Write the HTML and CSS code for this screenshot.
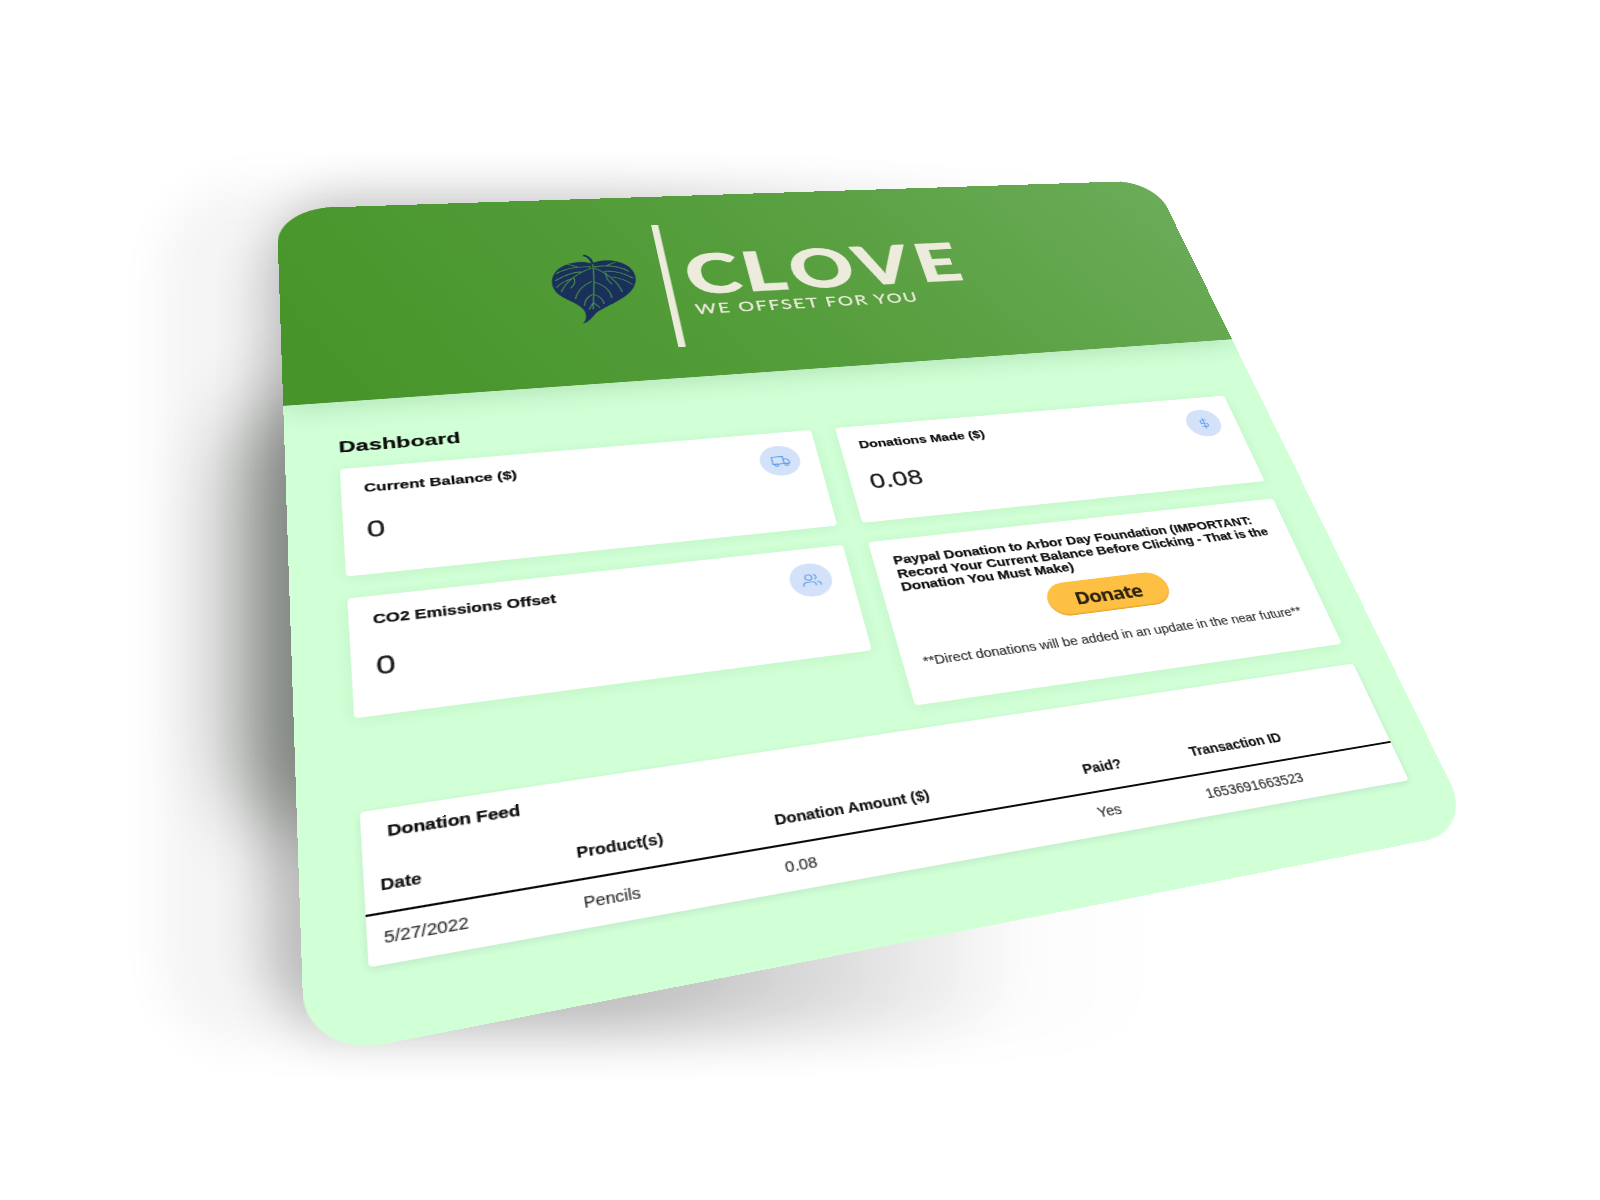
FILE: index.html
```html
<!DOCTYPE html>
<html lang="en">
<head>
<meta charset="utf-8">
<title>Clove Dashboard</title>
<link rel="stylesheet" href="styles.css">
</head>
<body>
<div class="shade shade-wide"></div>
<div class="shade shade-main"></div>
<div class="shade shade-side"></div>
<div class="board">
  <header class="banner">
    <svg class="logo" viewBox="0 0 1000 286" width="1000" height="286">
      <g class="leaf">
        <path class="leaf-body" d="M305 107C296 100 280 103 270 113C260 124 259 140 265 151C271 161 283 166 288 177C291 184 290 193 285 199C293 196 297 187 302 182C312 174 330 166 340 153C350 140 350 122 341 112C331 101 314 100 305 107Z"/>
        <path class="leaf-stem" d="M298 93C304 95 306 102 306 110"/>
        <path class="leaf-vein" d="M306 108C306 130 301 155 298 178M304 112C290 110 278 112 267 120M304 114C290 120 276 132 269 149M307 112C320 110 333 112 342 122M307 114C318 122 329 138 331 154M302 135C292 140 285 150 282 161M304 136C313 141 319 150 319 162M300 155C295 158 291 164 290 172M301 155C307 158 310 164 310 171M293 119C283 119 275 124 265 131M282 129C275 132 269 136 265 142M284 127C286 134 283 140 279 144M316 120C327 119 337 125 345 133M323 129C332 132 339 137 343 143M318 122C316 130 319 136 322 141M299 168L294 178M300 168L305 176M290 111L280 106M320 111L330 106"/>
      </g>
      <rect class="logo-bar" x="376" y="48" width="7.6" height="194"/>
      <text class="logo-name" x="400.5 462 514 589 659" y="163">CLOVE</text>
      <text class="logo-tag" x="402.5" y="194.500" textLength="244">WE OFFSET FOR YOU</text>
    </svg>
  </header>
  <main class="content">
    <h1 class="title">Dashboard</h1>
    <div class="cards">
      <section class="card stat">
        <div><h2 class="label">Current Balance ($)</h2><p class="value">0</p></div>
        <span class="badge"><svg viewBox="0 0 24 24"><path d="M1.500 4.500h14v12.500h-14zM15.500 9h4l3 3.500v4.500h-7z"/><circle cx="6" cy="18.500" r="2"/><circle cx="18.500" cy="18.500" r="2"/></svg></span>
      </section>
      <section class="card stat">
        <div><h2 class="label">Donations Made ($)</h2><p class="value">0.08</p></div>
        <span class="badge"><svg viewBox="0 0 24 24"><path d="M12 2v20M16.500 6H10a3 3 0 0 0 0 6h4a3 3 0 0 1 0 6H7"/></svg></span>
      </section>
      <section class="card stat short">
        <div><h2 class="label">CO2 Emissions Offset</h2><p class="value">0</p></div>
        <span class="badge"><svg viewBox="0 0 24 24"><circle cx="9" cy="7.500" r="4"/><path d="M1.500 20.500v-1.500a4.500 4.500 0 0 1 4.500-4.500h6a4.500 4.500 0 0 1 4.500 4.500v1.500M15.500 3.700a4 4 0 0 1 0 7.600M18.500 14.700a4.500 4.500 0 0 1 4 4.300v1.500"/></svg></span>
      </section>
      <section class="card pay">
        <h2 class="label">Paypal Donation to Arbor Day Foundation (IMPORTANT: Record Your Current Balance Before Clicking - That is the Donation You Must Make)</h2>
        <button class="donate">Donate</button>
        <p class="note">**Direct donations will be added in an update in the near future**</p>
      </section>
    </div>
    <section class="card feed">
      <h2 class="label feed-title">Donation Feed</h2>
      <div class="row head"><span>Date</span><span>Product(s)</span><span>Donation Amount ($)</span><span>Paid?</span><span>Transaction ID</span></div>
      <div class="row"><span>5/27/2022</span><span>Pencils</span><span>0.08</span><span>Yes</span><span>1653691663523</span></div>
    </section>
  </main>
</div>
</body>
</html>
```
FILE: styles.css
```css
* { box-sizing: border-box; }
html, body { margin: 0; width: 1600px; height: 1200px; overflow: hidden; background: #fff; }
body { position: relative; font-family: "Liberation Sans", Arial, sans-serif; color: #0c0c0c; }
h1, h2, p { margin: 0; }

/* soft shadow cast to the left and below the tilted board */
.shade { position: absolute; }
.shade-wide { left: 160px; top: 185px; width: 1030px; height: 860px; border-radius: 80px; background: linear-gradient(90deg, #000, #000 50%, transparent); opacity: .04; filter: blur(24px); }
.shade-main { left: 266px; top: 201px; width: 760px; height: 830px; border-radius: 80px; background: linear-gradient(90deg, #000 45%, transparent); opacity: .23; filter: blur(26px); }
.shade-side { left: 228px; top: 400px; width: 150px; height: 430px; border-radius: 75px; background: #0d1a0d; opacity: .34; filter: blur(38px); }

/* board laid out flat at 1000 x 950, then put in perspective */
.board {
  position: absolute; left: 0; top: 0; width: 1000px; height: 950px;
  border-radius: 53px; overflow: hidden; background: #d1ffd6;
  transform-origin: 0 0;
  transform: matrix3d(1.108, 0.0074, 0, 0.0002001, -0.0681053, 0.555474, 0, -0.000320632, 0, 0, 1, 0, 276.7, 209.1, 0, 1);
}
.banner { position: relative; height: 286.500px; background: linear-gradient(62deg, #47952a 5%, #569e3d 50%, #6bac59 100%); box-shadow: 0 4px 32px rgba(20, 90, 30, .18); }
.logo { display: block; }
.leaf-body { fill: #18305a; }
.leaf-stem { fill: none; stroke: #18305a; stroke-width: 2.600; }
.leaf-vein { fill: none; stroke: #4d8f4a; stroke-width: 1.300; }
.logo-bar, .logo-name, .logo-tag { fill: #ecebdc; }
.logo-name { font: 900 88.500px Lato, sans-serif; stroke: #ecebdc; stroke-width: 1; }
.logo-tag { font: 400 21px Lato, sans-serif; stroke: #ecebdc; stroke-width: .35; }

.content { padding: 47.500px 41px 0 46px; }
.title { font-size: 20.600px; line-height: 24px; margin-bottom: 15.500px; font-weight: 700; -webkit-text-stroke: .2px #0c0c0c; }
.cards { display: grid; grid-template-columns: 443px 443px; grid-template-rows: 129.500px 195.500px; column-gap: 25px; row-gap: 24.500px; align-items: start; }
.card { background: #fff; border-radius: 4px; box-shadow: 0 2px 14px rgba(20, 120, 30, .08); }
.stat { display: flex; justify-content: space-between; height: 129.500px; padding: 18.500px 19px 18.500px 19.500px; }
.short { height: 128.500px; }
.label { font-size: 14.600px; line-height: 16.500px; font-weight: 700; -webkit-text-stroke: .25px #0c0c0c; }
.value { margin-top: 25.500px; font-size: 28px; line-height: 33px; color: #1c1c1c; -webkit-text-stroke: .3px #1c1c1c; }
.badge { display: flex; align-items: center; justify-content: center; width: 40px; height: 40px; border-radius: 50%; background: #d3e2f8; }
.badge svg { width: 19px; height: 19px; fill: none; stroke: #5c9bea; stroke-width: 1.500; }
.pay { height: 195.500px; padding: 18.500px 12px 18px 19.500px; }
.donate { display: block; margin: 9.500px auto 0; position: relative; left: -3.500px; width: 128px; height: 40.500px; padding: 0; border: 0; border-radius: 21px; background: #fdc043; box-shadow: inset 0 -1.500px 0 #e5a52f; color: #2b220d; font: 700 21px "Noto Sans", sans-serif; letter-spacing: -.9px; line-height: 42px; }
.note { margin-top: 22.500px; font-size: 13.900px; line-height: 16px; color: #2c2c2c; white-space: nowrap; -webkit-text-stroke: .15px #2c2c2c; }
.feed { height: 138px; margin-top: 24.500px; padding-top: 13.500px; box-shadow: 0 2px 6px rgba(60, 70, 90, .12); }
.feed-title { padding-left: 19.500px; }
.row { display: grid; grid-template-columns: 148px 162px 280.500px 106.500px 1fr; padding: 13px 0 0 12px; font-size: 13.800px; line-height: 16px; color: #303030; -webkit-text-stroke: .15px #303030; }
.head { height: 47px; margin-top: 18px; padding-top: 14px; border-bottom: 2.200px solid #0a0a0a; font-weight: 700; color: #0c0c0c; }
```
